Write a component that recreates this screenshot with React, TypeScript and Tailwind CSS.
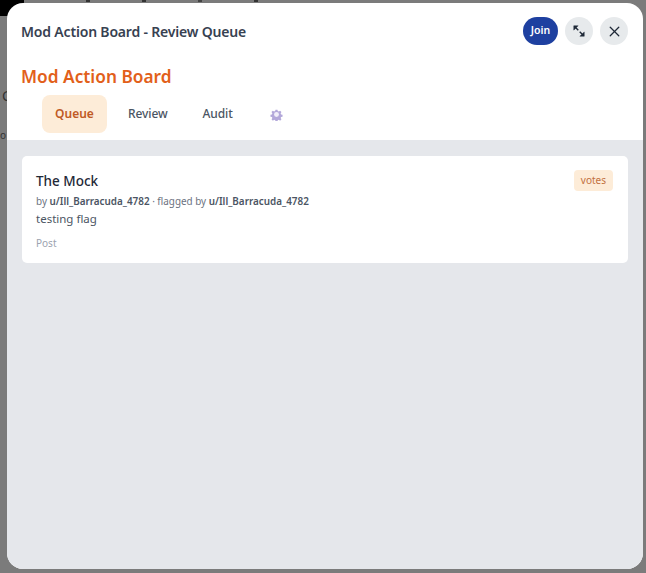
import { X } from "lucide-react";

const TABS = ["Review", "Audit"];

function ExpandIcon() {
  return (
    <svg viewBox="0 0 16 16" className="h-[14px] w-[14px]" fill="#1f2937" stroke="#1f2937">
      <path d="M2 2h5L2 7z" strokeWidth="0.5" strokeLinejoin="round" />
      <path d="M14 14H9l5-5z" strokeWidth="0.5" strokeLinejoin="round" />
      <path d="M4 4l3.2 3.2M8.8 8.8L12 12" strokeWidth="1.6" fill="none" />
    </svg>
  );
}

function GearIcon() {
  return (
    <svg viewBox="0 0 24 24" className="h-[13px] w-[13px] blur-[0.4px]">
      <path
        d="M10 2h4l.6 3 2.2.9 2.6-1.7 2.8 2.8-1.7 2.6.9 2.2 3 .6v4l-3 .6-.9 2.2 1.7 2.6-2.8 2.8-2.6-1.7-2.2.9-.6 3h-4l-.6-3-2.2-.9-2.6 1.7-2.8-2.8 1.7-2.6-.9-2.2-3-.6v-4l3-.6.9-2.2L1.6 7l2.8-2.8L7 5.9l2.2-.9z"
        fill="#b3a8da"
        transform="translate(1.2 1.2) scale(0.9)"
      />
      <circle cx="12" cy="12" r="4.5" fill="#f1eef9" />
    </svg>
  );
}

function Backdrop() {
  return (
    <>
      <div className="absolute left-0 top-0 h-[16px] w-[24px] rounded-br-[14px] bg-black" />
      <div className="absolute left-[86px] top-0 flex gap-[52px]">
        <span className="h-[2px] w-[4px] bg-[#333333]" />
        <span className="h-[2px] w-[4px] bg-[#333333]" />
        <span className="h-[2px] w-[4px] bg-[#444444]" />
        <span className="h-[2px] w-[4px] bg-[#333333]" />
      </div>
      <span className="absolute left-[2px] top-[88px] text-[14px] leading-[16px] text-[#333333]">C</span>
      <span className="absolute left-0 top-[127px] text-[10px] leading-[16px] text-[#333333]">o</span>
    </>
  );
}

export default function App() {
  return (
    <div className="relative h-[573px] w-[646px] overflow-hidden bg-[#7b7b7b] pb-[4px] pl-[7px] pr-[3px] pt-[3px] font-['Noto_Sans',sans-serif]">
      <Backdrop />
      <div className="relative flex h-full flex-col overflow-hidden rounded-[16px] bg-white">
        <div className="flex h-[56px] shrink-0 items-center justify-between pl-[14px] pr-[15px]">
          <h2 className="text-[14px] font-semibold tracking-[-0.18px] text-[#374151]">Mod Action Board - Review Queue</h2>
          <div className="flex items-center gap-[7px]">
            <button className="h-[28px] w-[35px] rounded-full bg-[#1e40a0] text-[10.5px] font-semibold text-white">Join</button>
            <button className="flex h-[28px] w-[28px] items-center justify-center rounded-full bg-[#e7eaec]">
              <ExpandIcon />
            </button>
            <button className="flex h-[28px] w-[28px] items-center justify-center rounded-full bg-[#e7eaec]">
              <X className="h-[17px] w-[17px] text-[#1f2937]" strokeWidth={1.8} />
            </button>
          </div>
        </div>
        <div className="shrink-0 px-[14px]">
          <h1 className="mt-[6px] text-[17.3px] font-semibold leading-[24px] text-[#e2601a]">Mod Action Board</h1>
          <div className="mt-[6px] flex items-center gap-[7px] pl-[21px]">
            <button className="h-[38px] w-[65px] rounded-[8px] bg-[#fdecd8] text-[12px] font-semibold text-[#c05a25]">Queue</button>
            {TABS.map((tab) => (
              <button key={tab} className="h-[38px] px-[14px] text-[12px] font-medium tracking-[-0.1px] text-[#4b5563]">
                {tab}
              </button>
            ))}
            <span className="ml-[16px] flex items-center">
              <GearIcon />
            </span>
          </div>
        </div>
        <div className="mt-[7px] flex-1 bg-[#e5e7eb] px-[15px] pt-[16px]">
          <div className="relative h-[107px] rounded-[5px] bg-white px-[14px] pt-[15px]">
            <span className="absolute right-[15px] top-[14px] rounded-[4px] bg-[#fdecd8] px-[7px] py-[2px] text-[10px] leading-[17px] text-[#c2703f]">votes</span>
            <h3 className="text-[13.5px] font-medium leading-[21px] text-[#1f2937]">The Mock</h3>
            <p className="text-[9.9px] leading-[18px] text-[#6b7280]">
              by <strong className="font-semibold text-[#4b5563]">u/Ill_Barracuda_4782</strong> · flagged by{" "}
              <strong className="font-semibold text-[#4b5563]">u/Ill_Barracuda_4782</strong>
            </p>
            <p className="text-[11.5px] leading-[18px] text-[#4b5563]">testing flag</p>
            <p className="mt-[7px] text-[10px] leading-[16px] text-[#9ca3af]">Post</p>
          </div>
        </div>
      </div>
    </div>
  );
}
